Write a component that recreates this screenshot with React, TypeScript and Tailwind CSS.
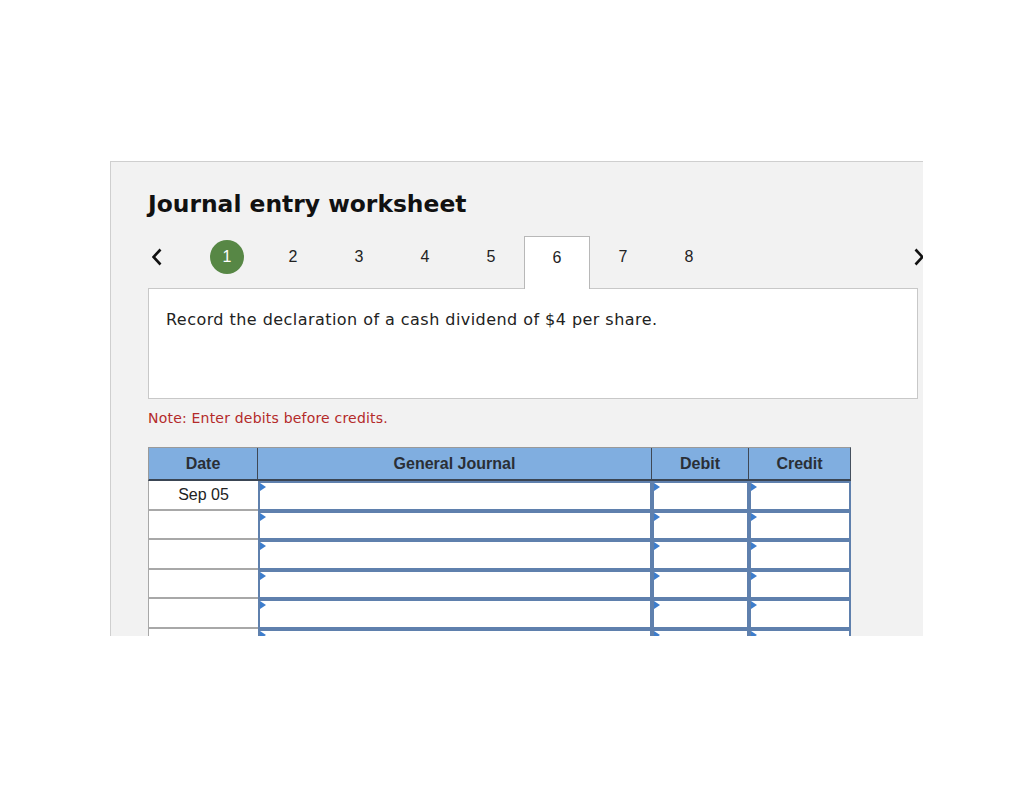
import React from 'react'

const steps = [1, 2, 3, 4, 5, 6, 7, 8]
const rows = ['Sep 05', '', '', '', '', '']

function Chevron({ dir }: { dir: 'left' | 'right' }) {
  return (
    <svg width="10" height="18" viewBox="0 0 10 18" fill="none">
      <polyline
        points={dir === 'left' ? '8.5,1.5 1.5,9 8.5,16.5' : '1.5,1.5 8.5,9 1.5,16.5'}
        stroke="#111"
        strokeWidth="2.6"
        strokeLinecap="butt"
        strokeLinejoin="miter"
      />
    </svg>
  )
}

function InputCell({ className }: { className: string }) {
  return (
    <div className={`relative h-full shrink-0 bg-white border-2 border-[#5f80ad] ${className}`}>
      <span className="absolute top-0 left-0 w-0 h-0 border-y-[4px] border-y-transparent border-l-[6px] border-l-[#3d7dcc]" />
    </div>
  )
}

export default function App() {
  return (
    <div className="w-[1024px] h-[791px] bg-white pt-[161px] pl-[110px]">
      <div className="w-[813px] h-[475px] overflow-hidden bg-[#f2f2f2] border-t border-l border-[#cfcfcf] pl-[37px] pt-[28px]">
        <h1 className="font-['DejaVu_Sans',sans-serif] font-bold text-[23.4px] leading-[28px] text-[#111]">
          Journal entry worksheet
        </h1>

        {/* step tabs */}
        <div className="mt-[18px] flex items-start h-[52px] w-[800px] font-['Liberation_Sans',Arial,sans-serif] text-[16px] text-[#222] relative z-10">
          <button className="w-[46px] h-[42px] shrink-0 flex items-center pl-[4px]">
            <Chevron dir="left" />
          </button>
          {steps.map((n) => (
            <div
              key={n}
              className={`w-[66px] shrink-0 ${
                n === 6 ? 'bg-white border border-b-0 border-[#b8b8b8] h-[53px]' : 'h-[52px]'
              }`}
            >
              <div className={`flex items-center justify-center ${n === 6 ? 'h-[41px]' : 'h-[42px]'}`}>
                {n === 1 ? (
                  <span className="w-[34px] h-[34px] rounded-full bg-[#578745] text-white flex items-center justify-center">
                    1
                  </span>
                ) : (
                  n
                )}
              </div>
            </div>
          ))}
          <div className="ml-[192px] h-[42px] shrink-0 flex items-center">
            <Chevron dir="right" />
          </div>
        </div>

        <div className="w-[770px] h-[111px] bg-white border border-[#c8c8c8] pl-[17px] pt-[21px] font-['DejaVu_Sans',sans-serif] text-[16px] tracking-[0.45px] leading-[20px] text-[#222]">
          Record the declaration of a cash dividend of $4 per share.
        </div>

        <p className="mt-[10px] font-['DejaVu_Sans',sans-serif] text-[14px] tracking-[0.2px] leading-[18px] text-[#b42a2a]">
          Note: Enter debits before credits.
        </p>

        <div className="mt-[20px] w-[703px] font-['Liberation_Sans',Arial,sans-serif] text-[16px] text-[#222]">
          <div className="flex h-[34px] bg-[#80aee0] border-t border-l border-r border-[#9a9a9a] border-r-[#45505e] border-b-2 border-b-[#3a4553] font-bold text-[#2a2f36]">
            <div className="w-[109px] flex items-center justify-center border-r border-[#3f4855]">Date</div>
            <div className="w-[394px] flex items-center justify-center border-r border-[#3f4855]">General Journal</div>
            <div className="w-[97px] flex items-center justify-center border-r border-[#3f4855]">Debit</div>
            <div className="flex-1 flex items-center justify-center">Credit</div>
          </div>
          {rows.map((d, i) => (
            <div key={i} className="flex h-[29.5px]">
              <div className="w-[110px] shrink-0 bg-white border-l border-b-2 border-[#a8a8a8] flex items-center justify-center">
                {d}
              </div>
              <InputCell className="w-[394px]" />
              <InputCell className="w-[97px]" />
              <InputCell className="w-[102px]" />
            </div>
          ))}
        </div>
      </div>
    </div>
  )
}
